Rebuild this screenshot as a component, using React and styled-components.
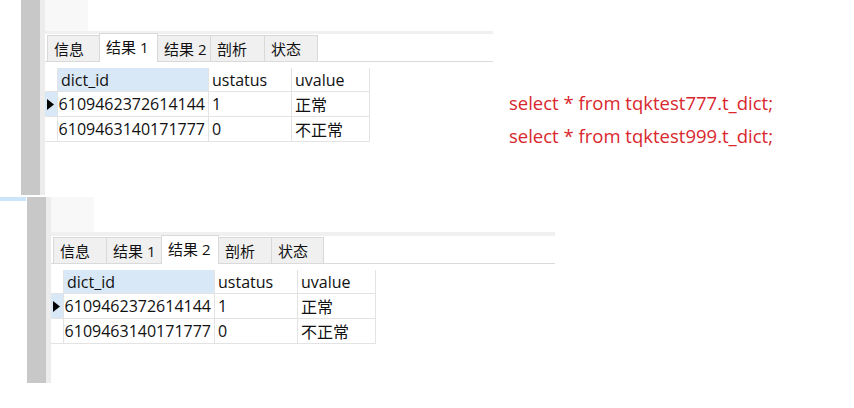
import React from 'react'
import styled, { createGlobalStyle } from 'styled-components'

const GlobalStyle = createGlobalStyle`
  html, body {
    margin: 0;
    padding: 0;
    background: #fff;
  }
  body {
    font-family: "Open Sans", "Noto Sans CJK SC", sans-serif;
    color: #111;
  }
`

const Page = styled.div`
  width: 854px;
  height: 408px;
  overflow: hidden;
  display: flex;
  flex-direction: column;
  gap: 2px;
`

const TopRow = styled.div`
  display: flex;
  align-items: flex-start;
`

const Panel = styled.div`
  display: flex;
  flex: none;
  width: ${p => p.$width}px;
  height: ${p => p.$height}px;
`

const Gutter = styled.div`
  flex: none;
  width: ${p => p.$width}px;
`

const Selection = styled.div`
  height: 4px;
  margin-right: 1px;
  background: #cde5fb;
`

const Scroll = styled.div`
  flex: none;
  width: 19px;
  background: #c8c8c8;
`

const Edge = styled.div`
  flex: none;
  width: 5px;
  background: #ececec;
`

const Content = styled.div`
  flex: 1;
  min-width: 0;
  display: flex;
  flex-direction: column;
`

const Header = styled.div`
  flex: none;
  height: ${p => p.$height}px;
`

const Corner = styled.div`
  width: 43px;
  height: 100%;
  background: #f8f8f8;
`

const TabTrack = styled.div`
  flex: none;
  height: ${p => p.$height}px;
  background: #f0f0f0;
`

const TabBar = styled.div`
  display: flex;
  align-items: flex-end;
  height: 27px;
  padding-left: 2px;
  border-bottom: 1px solid #dadada;
`

const Tab = styled.div`
  position: relative;
  box-sizing: border-box;
  width: ${p => p.$w}px;
  height: ${p => (p.$active ? 29 : 26)}px;
  margin-bottom: ${p => (p.$active ? -1 : 0)}px;
  margin-left: -1px;
  padding: ${p => (p.$active ? '0 0 3px 6px' : '0 0 0 6px')};
  display: flex;
  align-items: center;
  border: 1px solid #d9d9d9;
  border-bottom: none;
  background: ${p => (p.$active ? '#fff' : '#f0f0f0')};
  z-index: ${p => (p.$active ? 1 : 0)};
  font-size: 15px;
  white-space: nowrap;
  &:first-child {
    margin-left: 0;
  }
`

const Grid = styled.div`
  margin-top: 6px;
  display: grid;
  grid-template-columns: 13px 151px 83px 78px;
  grid-template-rows: 24px 25px 25px;
  width: max-content;
`

const Cell = styled.div`
  box-sizing: border-box;
  display: flex;
  align-items: center;
  justify-content: ${p => (p.$clip ? 'flex-end' : 'flex-start')};
  overflow: hidden;
  padding: ${p => (p.$clip ? '0 3px 0 0' : '0 0 0 3px')};
  border-right: 1px solid #e3e3e3;
  border-bottom: 1px solid #e3e3e3;
  background: ${p => (p.$hl ? '#d9e8f7' : '#fff')};
  font-size: 16px;
  white-space: nowrap;
`

const Marker = styled(Cell)`
  padding: 0 0 0 2px;
`

const Query = styled.div`
  margin: 86px 0 0 16px;
  color: #d9272e;
  font-size: 18.5px;
  line-height: 33px;
  white-space: nowrap;
`

const columns = ['dict_id', 'ustatus', 'uvalue']
const rows = [
  ['76109462372614144', '1', '正常'],
  ['76109463140171777', '0', '不正常'],
]

const Arrow = () => (
  <svg width="7" height="11" viewBox="0 0 7 11">
    <path d="M0 0 L7 5.5 L0 11 Z" fill="#000" />
  </svg>
)

const ResultPanel = ({ width, height, gutter, selected, corner, track, tabs, active }) => (
  <Panel $width={width} $height={height}>
    <Gutter $width={gutter}>{selected && <Selection />}</Gutter>
    <Scroll />
    <Edge />
    <Content>
      <Header $height={corner}>
        <Corner />
      </Header>
      <TabTrack $height={track} />
      <TabBar>
        {tabs.map(([label, w], i) => (
          <Tab key={label} $w={w} $active={i === active}>{label}</Tab>
        ))}
      </TabBar>
      <Grid>
        <Cell />
        {columns.map((c, i) => (
          <Cell key={c} $hl={i === 0}>{c}</Cell>
        ))}
        {rows.map((r, ri) => (
          <React.Fragment key={r[0]}>
            <Marker $hl={ri === 0}>{ri === 0 && <Arrow />}</Marker>
            <Cell $clip>{r[0]}</Cell>
            <Cell>{r[1]}</Cell>
            <Cell>{r[2]}</Cell>
          </React.Fragment>
        ))}
      </Grid>
    </Content>
  </Panel>
)

const App = () => (
  <>
    <GlobalStyle />
    <Page>
      <TopRow>
        <ResultPanel
          width={493}
          height={195}
          gutter={21}
          corner={31}
          track={3}
          active={1}
          tabs={[['信息', 53], ['结果 1', 59], ['结果 2', 54], ['剖析', 55], ['状态', 54]]}
        />
        <Query>
          <div>select * from tqktest777.t_dict;</div>
          <div>select * from tqktest999.t_dict;</div>
        </Query>
      </TopRow>
      <ResultPanel
        width={555}
        height={186}
        gutter={27}
        selected
        corner={35}
        track={4}
        active={2}
        tabs={[['信息', 54], ['结果 1', 56], ['结果 2', 58], ['剖析', 54], ['状态', 53]]}
      />
    </Page>
  </>
)

export default App
